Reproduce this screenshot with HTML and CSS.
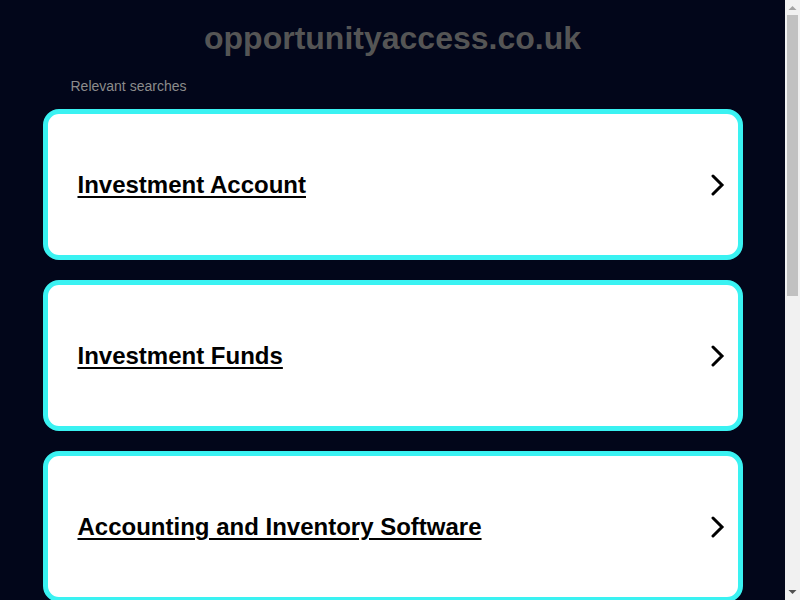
FILE: index.html
```html
<!DOCTYPE html>
<html lang="en">
<head>
<meta charset="utf-8">
<title>opportunityaccess.co.uk</title>
<link rel="stylesheet" href="styles.css">
</head>
<body>
<div class="frame">
  <div class="page">
    <h1 class="domain">opportunityaccess.co.uk</h1>
    <div class="container">
      <p class="label">Relevant searches</p>
      <a class="card" href="#"><span class="card-text">Investment Account</span><svg class="chev" width="14" height="22" viewBox="0 0 14 22"><polyline points="2,2 11,11 2,20" /></svg></a>
      <a class="card" href="#"><span class="card-text">Investment Funds</span><svg class="chev" width="14" height="22" viewBox="0 0 14 22"><polyline points="2,2 11,11 2,20" /></svg></a>
      <a class="card" href="#"><span class="card-text">Accounting and Inventory Software</span><svg class="chev" width="14" height="22" viewBox="0 0 14 22"><polyline points="2,2 11,11 2,20" /></svg></a>
    </div>
  </div>
  <div class="scrollbar">
    <div class="sb-btn"><svg width="15" height="15" viewBox="0 0 15 15"><polygon class="arrow-off" points="3.5,10 11.5,10 7.5,6" /></svg></div>
    <div class="sb-track"><div class="sb-thumb"></div></div>
    <div class="sb-btn"><svg width="15" height="15" viewBox="0 0 15 15"><polygon class="arrow-on" points="3.5,5 11.5,5 7.5,9" /></svg></div>
  </div>
</div>
</body>
</html>
```
FILE: styles.css
```css
html, body {
  margin: 0;
  padding: 0;
  background: #02061a;
}
body {
  font-family: "Liberation Sans", Arial, sans-serif;
}
.frame {
  display: flex;
  height: 600px;
  overflow: hidden;
}
.page {
  flex: 1;
  padding-top: 20px;
}
.domain {
  margin: 0;
  font-size: 32px;
  line-height: 37px;
  font-weight: bold;
  color: #555555;
  text-align: center;
}
.container {
  width: 700px;
  margin: 0 auto;
}
.label {
  margin: 21px 0 15px 28px;
  font-size: 14px;
  line-height: 16px;
  color: #8c8c8c;
}
.card {
  box-sizing: border-box;
  display: flex;
  align-items: center;
  justify-content: space-between;
  height: 151px;
  margin-bottom: 20px;
  padding: 0 13px 0 30px;
  background: #ffffff;
  border: 5px solid #3af2f2;
  border-radius: 16px;
  color: #000000;
  text-decoration: none;
}
.card-text {
  font-size: 24px;
  font-weight: bold;
  text-decoration: underline;
  text-decoration-thickness: 2px;
  text-underline-offset: 3px;
}
.chev polyline {
  fill: none;
  stroke: #000000;
  stroke-width: 3;
  stroke-linecap: round;
  stroke-linejoin: miter;
}
.scrollbar {
  width: 15px;
  flex: none;
  display: flex;
  flex-direction: column;
  background: #f1f1f1;
}
.sb-btn {
  height: 15px;
  flex: none;
}
.sb-btn svg {
  display: block;
}
.arrow-off {
  fill: #a3a3a3;
}
.arrow-on {
  fill: #505050;
}
.sb-track {
  flex: 1;
}
.sb-thumb {
  height: 281px;
  margin: 0 2px;
  background: #c1c1c1;
}
```
